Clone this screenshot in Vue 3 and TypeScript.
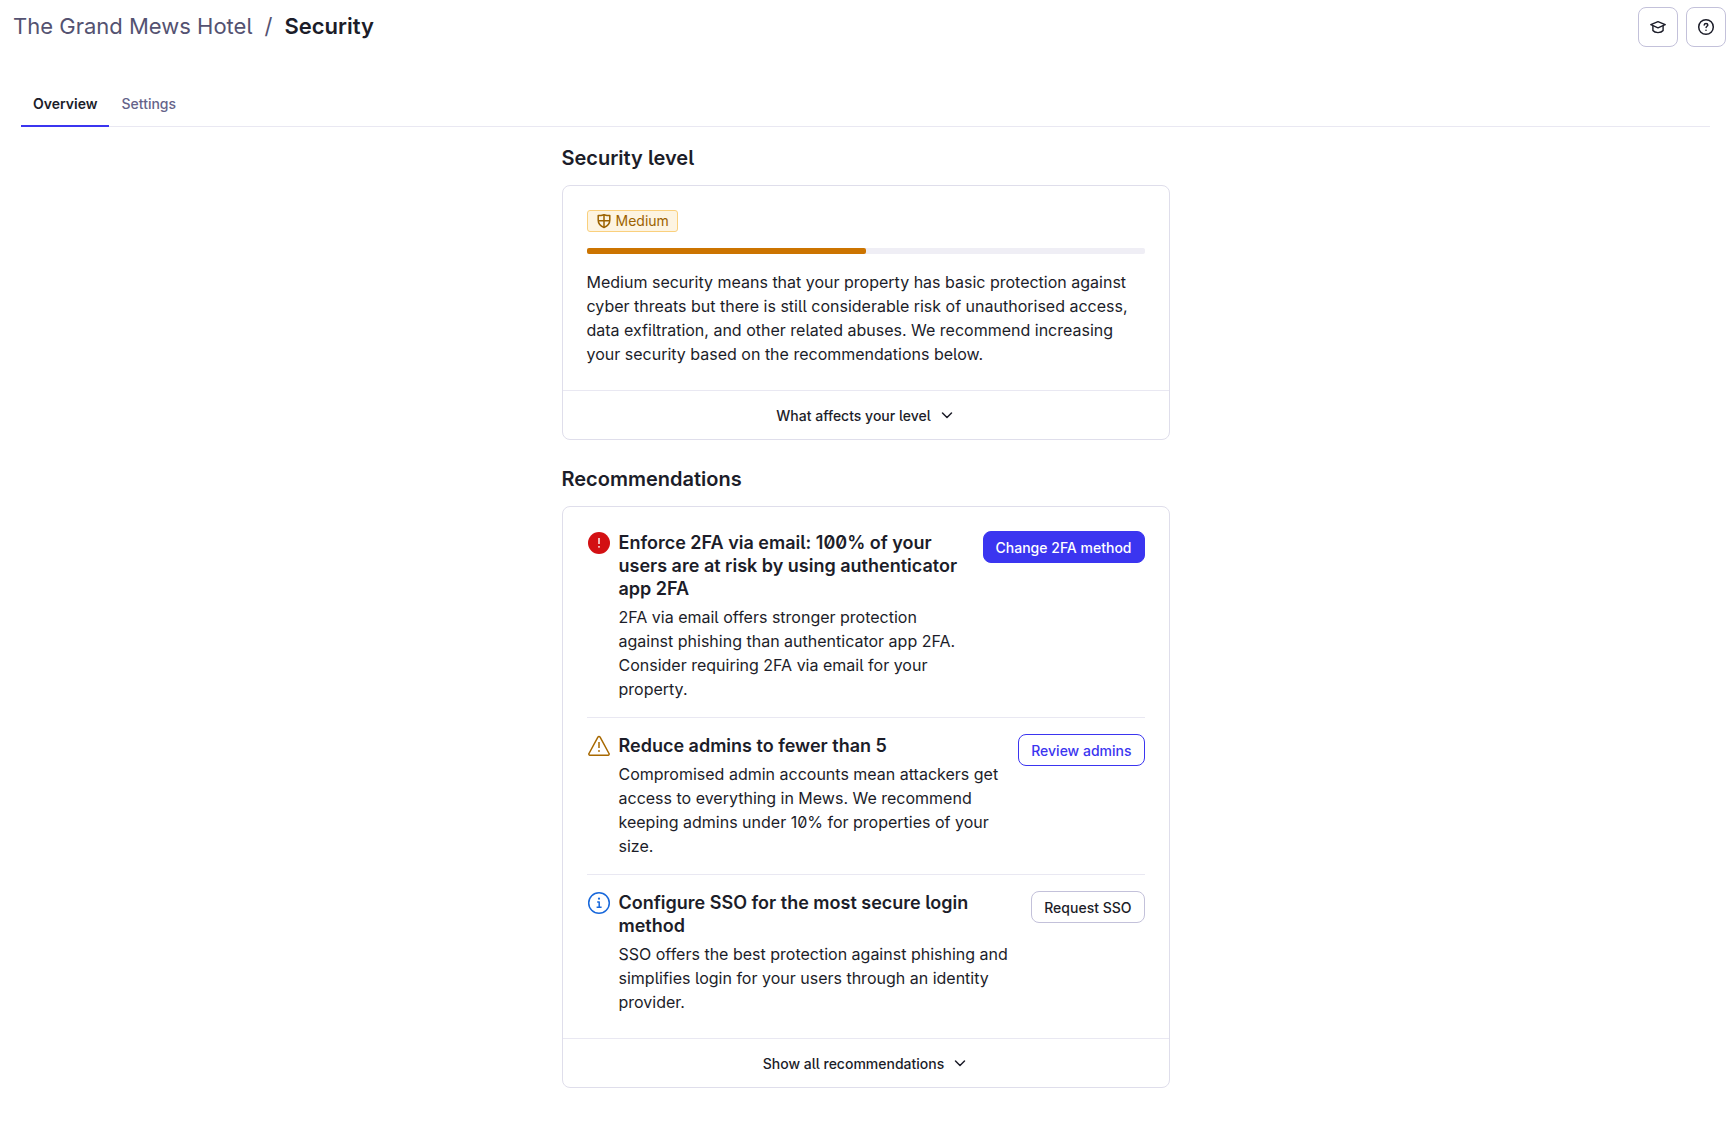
<script setup lang="ts">
import { ref } from 'vue'

type Severity = 'critical' | 'warning' | 'info'

interface Recommendation {
  severity: Severity
  title: string
  text: string
  action: string
  variant: 'primary' | 'outline' | 'neutral'
}

const tabs: string[] = ['Overview', 'Settings']
const activeTab = ref<string>('Overview')
const securityScore = ref<number>(50)

const recommendations: Recommendation[] = [
  {
    severity: 'critical',
    title: 'Enforce 2FA via email: 100% of your users are at risk by using authenticator app 2FA',
    text: '2FA via email offers stronger protection against phishing than authenticator app 2FA. Consider requiring 2FA via email for your property.',
    action: 'Change 2FA method',
    variant: 'primary',
  },
  {
    severity: 'warning',
    title: 'Reduce admins to fewer than 5',
    text: 'Compromised admin accounts mean attackers get access to everything in Mews. We recommend keeping admins under 10% for properties of your size.',
    action: 'Review admins',
    variant: 'outline',
  },
  {
    severity: 'info',
    title: 'Configure SSO for the most secure login method',
    text: 'SSO offers the best protection against phishing and simplifies login for your users through an identity provider.',
    action: 'Request SSO',
    variant: 'neutral',
  },
]
</script>

<template>
  <div class="page">
    <header class="topbar">
      <nav class="breadcrumb" aria-label="Breadcrumb">
        <a class="crumb" href="#">The Grand Mews Hotel</a>
        <span class="slash">/</span>
        <h1 class="current">Security</h1>
      </nav>
      <div class="tools">
        <button class="tool" type="button" aria-label="Learning">
          <svg width="20" height="20" viewBox="0 0 20 20" fill="none" stroke="currentColor" stroke-width="1.4" stroke-linejoin="round" stroke-linecap="round">
            <path d="M10 4.6 17.2 7.7 10 10.8 2.800 7.7Z" />
            <path d="M4.900 9v4.500c1 1.400 2.800 2.100 5.100 2.100s4.100-.7 5.100-2.100V9" />
          </svg>
        </button>
        <button class="tool" type="button" aria-label="Help">
          <svg width="20" height="20" viewBox="0 0 20 20" fill="none" stroke="currentColor" stroke-width="1.5" stroke-linecap="round">
            <circle cx="10" cy="10" r="7.3" />
            <path d="M8.2 8c.1-1 .9-1.500 1.800-1.500s1.800.6 1.800 1.500c0 1.200-1.700 1.300-1.700 2.500" />
            <circle cx="10" cy="13.2" r=".8" fill="currentColor" stroke="none" />
          </svg>
        </button>
      </div>
    </header>

    <div class="main">
      <nav class="tabs" aria-label="Sections">
        <button
          v-for="tab in tabs"
          :key="tab"
          type="button"
          class="tab"
          :class="{ active: tab === activeTab }"
          @click="activeTab = tab"
        >{{ tab }}</button>
      </nav>

      <main class="content">
        <section>
          <h2 class="heading">Security level</h2>
          <div class="card">
            <div class="body">
              <span class="badge">
                <svg width="16" height="16" viewBox="0 0 16 16" fill="none" stroke="currentColor" stroke-width="1.5" stroke-linejoin="round">
                  <path d="M2.2 2.6C4 2.6 6 2.3 8 1.7c2 .6 4 .9 5.8.9v4.7c0 3.300-2 5.700-5.800 7.200-3.800-1.500-5.800-3.900-5.800-7.200Z" />
                  <path d="M8 1.7v12.600M2.200 7.7h11.600" />
                </svg>
                Medium
              </span>
              <div class="meter" role="progressbar" aria-label="Security level" :aria-valuenow="securityScore" aria-valuemin="0" aria-valuemax="100">
                <div class="fill" :style="{ width: securityScore + '%' }"></div>
              </div>
              <p class="copy">
                Medium security means that your property has basic protection against cyber threats but there is still considerable risk of unauthorised access, data exfiltration, and other related abuses. We recommend increasing your security based on the recommendations below.
              </p>
            </div>
            <button class="expand" type="button">
              What affects your level
              <svg width="16" height="16" viewBox="0 0 16 16" fill="none" stroke="currentColor" stroke-width="1.5" stroke-linecap="round" stroke-linejoin="round">
                <path d="M3.5 6 8 10.500 12.500 6" />
              </svg>
            </button>
          </div>
        </section>

        <section>
          <h2 class="heading">Recommendations</h2>
          <div class="card">
            <ul class="body list">
              <li v-for="item in recommendations" :key="item.title" class="item">
                <svg class="status" :class="item.severity" width="24" height="24" viewBox="0 0 24 24" fill="none" stroke-linecap="butt" stroke-linejoin="round">
                  <template v-if="item.severity === 'critical'">
                    <circle cx="12" cy="12" r="11" fill="currentColor" />
                    <path d="M12 7v6" stroke="#ffffff" stroke-width="1.4" />
                    <circle cx="12" cy="15.8" r=".9" fill="#ffffff" />
                  </template>
                  <template v-else-if="item.severity === 'warning'">
                    <path d="M10.900 3.200a1.300 1.300 0 0 1 2.200 0l8.900 16.300a1.100 1.100 0 0 1-1 1.700H3a1.100 1.100 0 0 1-1-1.700Z" stroke="currentColor" stroke-width="1.5" />
                    <path d="M12 8v6" stroke="currentColor" stroke-width="1.5" />
                    <circle cx="12" cy="17" r=".9" fill="currentColor" />
                  </template>
                  <template v-else>
                    <circle cx="12" cy="12" r="10.3" stroke="currentColor" stroke-width="1.5" />
                    <path d="M10.2 10.900h2v5.300M9.600 16.300h5" stroke="currentColor" stroke-width="1.5" />
                    <circle cx="12" cy="7.700" r="1.100" fill="currentColor" />
                  </template>
                </svg>
                <div class="details">
                  <h3 class="title">{{ item.title }}</h3>
                  <p class="copy">{{ item.text }}</p>
                </div>
                <button type="button" class="action" :class="item.variant">{{ item.action }}</button>
              </li>
            </ul>
            <button class="expand" type="button">
              Show all recommendations
              <svg width="16" height="16" viewBox="0 0 16 16" fill="none" stroke="currentColor" stroke-width="1.5" stroke-linecap="round" stroke-linejoin="round">
                <path d="M3.5 6 8 10.500 12.500 6" />
              </svg>
            </button>
          </div>
        </section>
      </main>
    </div>
  </div>
</template>

<style>
body {
  background: #ffffff;
}
</style>

<style scoped>
* {
  box-sizing: border-box;
}

.page {
  font-family: Inter, 'Liberation Sans', sans-serif;
  font-feature-settings: 'zero', 'cv05';
  color: #1c1d29;
}

h1,
h2,
h3,
p,
ul {
  margin: 0;
  padding: 0;
}

button {
  font: inherit;
  font-feature-settings: inherit;
  color: inherit;
  background: none;
  cursor: pointer;
}

.topbar {
  display: flex;
  align-items: center;
  justify-content: space-between;
  padding: 7px 7px 7px 13px;
}

.breadcrumb {
  display: flex;
  align-items: center;
  gap: 12px;
  font-size: 22px;
  line-height: 28px;
  padding-bottom: 2px;
  color: #545271;
}

.crumb {
  color: inherit;
  text-decoration: none;
}

.current {
  font-size: 22px;
  font-weight: 600;
  color: #1c1d29;
}

.tools {
  display: flex;
  gap: 8px;
}

.tool {
  display: flex;
  align-items: center;
  justify-content: center;
  width: 40px;
  height: 40px;
  padding: 0;
  border: 1px solid #c3c1da;
  border-radius: 8px;
}

.main {
  padding: 32px 23px 50px 21px;
}

.tabs {
  display: flex;
  box-shadow: inset 0 -1px #e9e8f2;
}

.tab {
  padding: 8px 12px 12px;
  border: 0;
  border-bottom: 2px solid transparent;
  font-size: 14px;
  line-height: 19px;
  font-weight: 500;
  color: #65638a;
}

.tab.active {
  border-bottom-color: #3b35f0;
  font-weight: 600;
  color: #1c1d29;
}

.content {
  display: flex;
  flex-direction: column;
  gap: 26px;
  max-width: 608px;
  margin: 18px auto 0;
}

.heading {
  margin-bottom: 14px;
  font-size: 20px;
  line-height: 26px;
  font-weight: 600;
}

.card {
  border: 1px solid #dfdeeb;
  border-radius: 8px;
}

.body {
  padding: 24px;
}

.badge {
  display: flex;
  align-items: center;
  gap: 4px;
  width: fit-content;
  padding: 0 8px;
  border: 1px solid #fad07d;
  border-radius: 3px;
  background: #fdf4e2;
  color: #9c6200;
  font-size: 14px;
  line-height: 20px;
}

.meter {
  height: 6px;
  margin: 16px 0;
  border-radius: 2px;
  background: #efeef5;
}

.fill {
  height: 100%;
  border-radius: 2px;
  background: #cc7400;
}

.copy {
  font-size: 16px;
  line-height: 24px;
}

.expand {
  display: flex;
  align-items: center;
  justify-content: center;
  gap: 8px;
  width: 100%;
  height: 49px;
  border: 0;
  border-top: 1px solid #e9e8f2;
  font-size: 14px;
  font-weight: 500;
}

.list {
  list-style: none;
}

.item {
  display: flex;
  align-items: flex-start;
  gap: 8px;
}

.item + .item {
  margin-top: 16px;
  padding-top: 16px;
  border-top: 1px solid #e9e8f2;
}

.status {
  flex: none;
}

.critical {
  color: #d31013;
}

.warning {
  color: #a76800;
}

.info {
  color: #1868db;
}

.details {
  flex: 1;
}

.title {
  margin-bottom: 5px;
  font-size: 18px;
  line-height: 23px;
  font-weight: 600;
}

.action {
  flex: none;
  height: 32px;
  margin-left: 8px;
  padding: 0 12px;
  border: 1px solid #c3c1da;
  border-radius: 8px;
  font-size: 14px;
  font-weight: 500;
}

.action.primary {
  border-color: #3b35f0;
  background: #3b35f0;
  color: #ffffff;
}

.action.outline {
  border-color: #3b35f0;
  color: #3b35f0;
}
</style>
